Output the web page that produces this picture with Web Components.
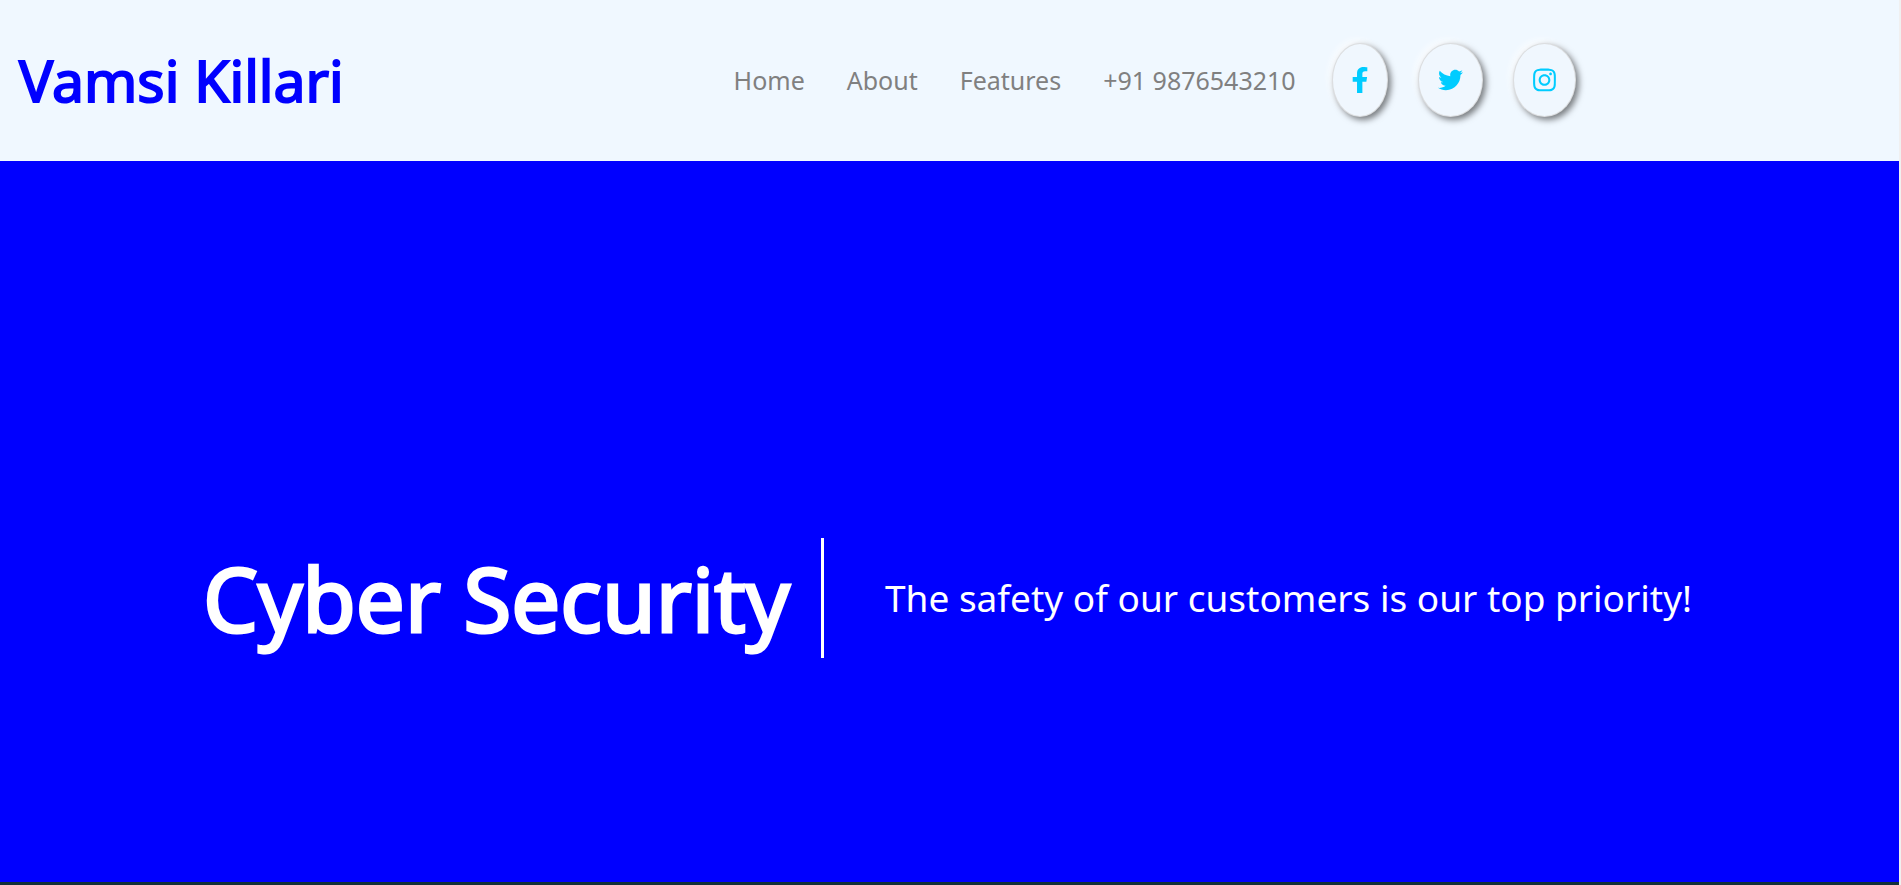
<!DOCTYPE html>
<html lang="en">
<head>
<meta charset="utf-8">
<title>Vamsi Killari</title>
<style>
html, body { height: 100%; margin: 0; }
body { font-family: "Noto Sans", "Open Sans", sans-serif; background: #f0f0f0; }
</style>
</head>
<body>
<landing-page>
  <site-header>
    <span slot="brand">Vamsi Killari</span>
    <nav-link href="#home">Home</nav-link>
    <nav-link href="#about">About</nav-link>
    <nav-link href="#features">Features</nav-link>
    <nav-link href="tel:+919876543210">+91 9876543210</nav-link>
    <social-link slot="social" href="#facebook" label="Facebook">
      <svg width="16" height="26" viewBox="10 0 300 512" preserveAspectRatio="none" fill="currentColor"><path d="M279.14 288l14.22-92.66h-88.91v-60.13c0-25.35 12.42-50.06 52.24-50.06h40.42V6.26S260.43 0 225.36 0c-73.22 0-121.08 44.38-121.08 124.72v70.62H22.89V288h81.39v224h100.17V288z"/></svg>
    </social-link>
    <social-link slot="social" href="#twitter" label="Twitter">
      <svg width="25" height="26" viewBox="0 0 512 512" fill="currentColor"><path d="M459.37 151.716c.325 4.548.325 9.097.325 13.645 0 138.72-105.583 298.558-298.558 298.558-59.452 0-114.68-17.219-161.137-47.106 8.447.974 16.568 1.299 25.34 1.299 49.055 0 94.213-16.568 130.274-44.832-46.132-.975-84.792-31.188-98.112-72.772 6.498.974 12.995 1.624 19.818 1.624 9.421 0 18.843-1.3 27.614-3.573-48.081-9.747-84.143-51.98-84.143-102.985v-1.299c13.969 7.797 30.214 12.67 47.431 13.319-28.264-18.843-46.781-51.005-46.781-87.391 0-19.492 5.197-37.36 14.294-52.954 51.655 63.675 129.3 105.258 216.365 109.807-1.624-7.797-2.599-15.918-2.599-24.04 0-57.828 46.782-104.934 104.934-104.934 30.213 0 57.502 12.67 76.67 33.137 23.715-4.548 46.456-13.32 66.599-25.34-7.798 24.366-24.366 44.833-46.132 57.827 21.117-2.273 41.584-8.122 60.426-16.243-14.292 20.791-32.161 39.308-52.628 54.253z"/></svg>
    </social-link>
    <social-link slot="social" href="#instagram" label="Instagram">
      <svg width="23" height="26" viewBox="0 0 448 512" fill="currentColor"><path d="M224.1 141c-63.6 0-114.9 51.3-114.9 114.9s51.3 114.9 114.9 114.9S339 319.5 339 255.9 287.7 141 224.1 141zm0 189.6c-41.1 0-74.7-33.5-74.7-74.7s33.5-74.7 74.7-74.7 74.7 33.5 74.7 74.7-33.6 74.7-74.7 74.7zm146.4-194.3c0 14.9-12 26.8-26.8 26.8-14.9 0-26.8-12-26.8-26.8s12-26.8 26.8-26.8 26.8 12 26.8 26.8zm76.1 27.2c-1.7-35.9-9.9-67.7-36.2-93.9-26.2-26.2-58-34.4-93.9-36.2-37-2.1-147.9-2.1-184.9 0-35.8 1.7-67.6 9.9-93.9 36.1s-34.4 58-36.2 93.9c-2.1 37-2.1 147.9 0 184.9 1.7 35.9 9.9 67.7 36.2 93.9s58 34.4 93.9 36.2c37 2.1 147.9 2.1 184.9 0 35.9-1.7 67.7-9.9 93.9-36.2 26.2-26.2 34.4-58 36.2-93.9 2.1-37 2.1-147.8 0-184.8zM398.8 388c-7.8 19.6-22.9 34.7-42.6 42.6-29.5 11.7-99.5 9-132.1 9s-102.7 2.6-132.1-9c-19.6-7.8-34.7-22.9-42.6-42.6-11.7-29.5-9-99.5-9-132.1s-2.6-102.7 9-132.1c7.8-19.6 22.9-34.7 42.6-42.6 29.5-11.7 99.5-9 132.1-9s102.7-2.6 132.1 9c19.6 7.8 34.7 22.9 42.6 42.6 11.7 29.5 9 99.5 9 132.1s2.7 102.7-9 132.1z"/></svg>
    </social-link>
  </site-header>
  <hero-banner>
    <span slot="title">Cyber Security</span>
    <span slot="tagline">The safety of our customers is our top priority!</span>
  </hero-banner>
</landing-page>
<script>
function define(name, html) {
  const template = document.createElement('template');
  template.innerHTML = html;
  customElements.define(name, class extends HTMLElement {
    constructor() {
      super();
      this.attachShadow({ mode: 'open' }).append(template.content.cloneNode(true));
    }
    connectedCallback() {
      const link = this.shadowRoot.querySelector('a');
      if (!link) return;
      if (this.hasAttribute('href')) link.href = this.getAttribute('href');
      if (this.hasAttribute('label')) link.setAttribute('aria-label', this.getAttribute('label'));
    }
  });
}

define('landing-page', `
<style>
:host { display: flex; flex-direction: column; box-sizing: border-box; min-height: 100vh;
  margin-right: 2px; border-bottom: 3px solid #12303a; }
</style>
<slot></slot>`);

define('site-header', `
<style>
:host { display: grid; grid-template-columns: 38fr 62fr; align-items: center;
  padding: 40px 0 41px; background: #f0f8ff; }
h1 { margin: 0; padding-left: 19px; font-size: 57px; line-height: 80px; font-weight: 400;
  color: #00f; -webkit-text-stroke: 2px #00f; white-space: nowrap; }
nav { display: flex; align-items: center; gap: 42px; padding-left: 12px; }
.social { display: flex; align-items: center; gap: 30px; margin-left: -6px; }
</style>
<h1><slot name="brand"></slot></h1>
<nav><slot></slot><div class="social"><slot name="social"></slot></div></nav>`);

define('nav-link', `
<style>
:host { display: block; }
a { color: #808080; font-size: 25px; line-height: 36px; text-decoration: none; white-space: nowrap; }
</style>
<a href="#"><slot></slot></a>`);

define('social-link', `
<style>
:host { display: block; }
a { display: flex; align-items: center; justify-content: center; height: 74px; padding: 0 19px;
  box-sizing: border-box; color: #0cf; border: 1px solid rgba(190,185,180,.4); border-radius: 50%;
  box-shadow: 3px 3px 6px rgba(0,0,0,.5), -3px -3px 6px #fbfdff; background: #f0f7fe; }
</style>
<a href="#"><slot></slot></a>`);

define('hero-banner', `
<style>
:host { display: flex; flex: 1; align-items: center; justify-content: center;
  padding: 152px 4px 0 0; box-sizing: border-box; background: #00f; color: #fff; }
h2 { margin: 0; padding-right: 31px; border-right: 3px solid #fff; font-size: 87px; line-height: 120px;
  font-weight: 400; -webkit-text-stroke: 3px #fff; white-space: nowrap; }
p { margin: 0; padding-left: 61px; font-size: 37px; line-height: 52px; white-space: nowrap; }
</style>
<h2><slot name="title"></slot></h2>
<p><slot name="tagline"></slot></p>`);
</script>
</body>
</html>
